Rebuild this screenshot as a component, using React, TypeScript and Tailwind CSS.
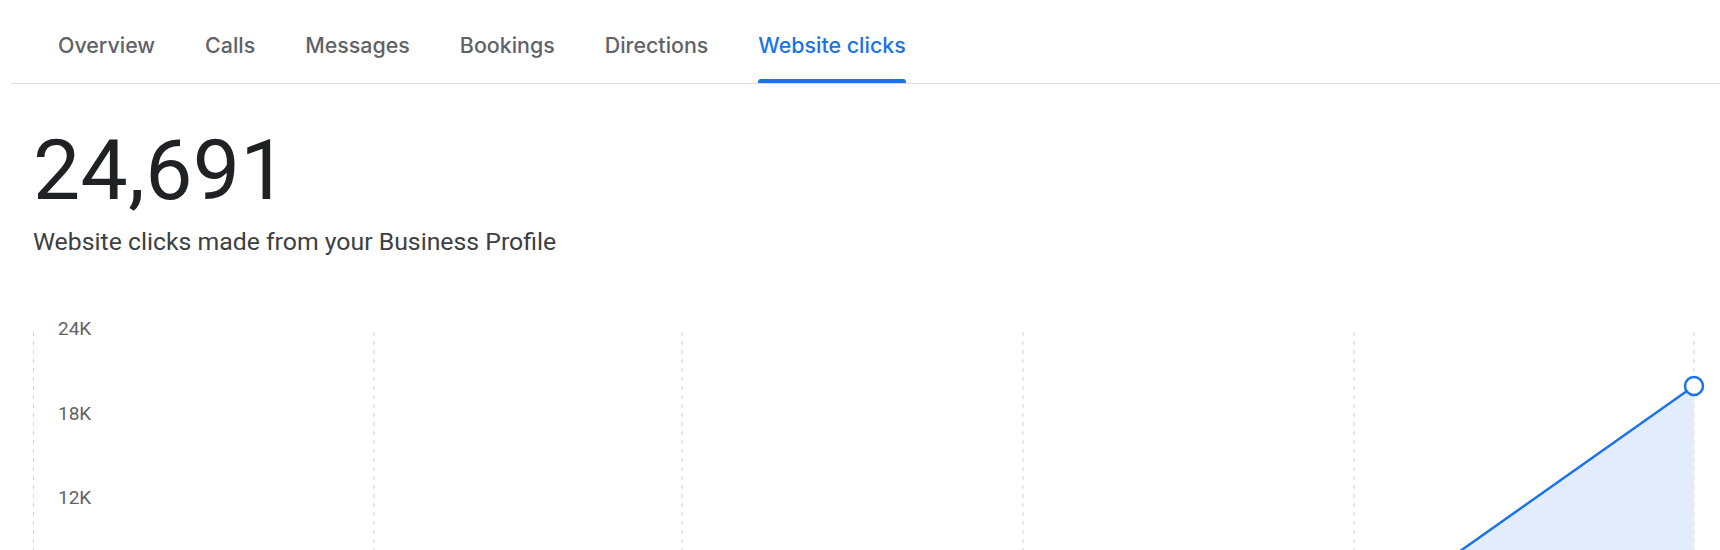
import React from 'react';

const tabs = ['Overview', 'Calls', 'Messages', 'Bookings', 'Directions', 'Website clicks'];

// x positions of the dashed grid lines, relative to the chart's left edge
const gridX = [0.5, 341, 649, 990, 1321, 1661];

const points = [
  [0.5, 330],
  [341, 322],
  [649, 318],
  [990, 326],
  [1321, 306],
  [1661, 66],
];

const yLabels = [
  { label: '24K', top: 'top-[-3px]' },
  { label: '18K', top: 'top-[82px]' },
  { label: '12K', top: 'top-[166px]' },
];

const Chart = () => {
  const line = points.map(([x, y], i) => `${i === 0 ? 'M' : 'L'}${x},${y}`).join(' ');
  const area = `${line} L1661,345 L0.5,345 Z`;
  const [lx, ly] = points[points.length - 1];

  return (
    <div className="relative mt-[62px] h-[400px]">
      <svg width="1687" height="400" className="block" viewBox="0 0 1687 400">
        {gridX.map((x) => (
          <line key={x} x1={x} x2={x} y1={12} y2={345} stroke="#d0d3d7" strokeWidth={1} strokeDasharray="4 5" />
        ))}
        <path d={area} fill="#e3ecfc" />
        <path d={line} fill="none" stroke="#1a73e8" strokeWidth={2.5} strokeLinejoin="round" />
        <circle cx={lx} cy={ly} r={9} fill="#fff" stroke="#1a73e8" strokeWidth={2.5} />
      </svg>
      {yLabels.map((y) => (
        <span
          key={y.label}
          className={`absolute left-[25px] ${y.top} text-[19px] leading-[24px] text-[#5f6368]`}
        >
          {y.label}
        </span>
      ))}
    </div>
  );
};

export default function App() {
  const active = 'Website clicks';

  return (
    <div className="min-h-screen bg-white pl-[11px] font-['Roboto',sans-serif]">
      <nav className="flex border-b border-[#dadce0] pl-[22px]">
        {tabs.map((t) => {
          const isActive = t === active;
          return (
            <button key={t} className="flex h-[83px] cursor-pointer flex-col px-[25px]">
              <span
                className={`flex flex-1 items-center pt-[11px] font-['Inter',sans-serif] text-[21.4px] font-medium leading-normal ${
                  isActive ? 'text-[#1a73e8]' : 'text-[#5f6368]'
                }`}
              >
                {t}
              </span>
              <span className={`h-[4px] rounded-t-[3px] ${isActive ? 'bg-[#1a73e8]' : 'bg-transparent'}`} />
            </button>
          );
        })}
      </nav>

      <div className="pl-[22px]">
        <div className="mt-[45px] text-[84px] font-normal leading-none tracking-[0.4px] text-[#202124]">24,691</div>
        <p className="mt-[13px] text-[24.8px] leading-[32px] text-[#3c4043]">
          Website clicks made from your Business Profile
        </p>
        <Chart />
      </div>
    </div>
  );
}
